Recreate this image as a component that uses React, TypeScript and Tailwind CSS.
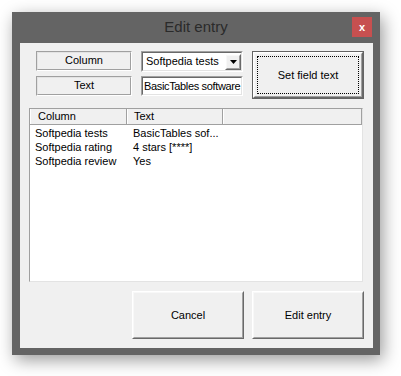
import React from "react";

const font = { fontFamily: '"Liberation Sans", Arial, sans-serif' };

function Raised({ className = "", children }: { className?: string; children?: React.ReactNode }) {
  return (
    <div className={`border border-t-white border-l-white border-b-[#696969] border-r-[#696969] ${className}`}>
      <div className="w-full h-full border border-t-[#f8f8f8] border-l-[#f8f8f8] border-b-[#a0a0a0] border-r-[#a0a0a0] flex items-center justify-center">
        {children}
      </div>
    </div>
  );
}

export default function App() {
  const rows = [
    ["Softpedia tests", "BasicTables sof..."],
    ["Softpedia rating", "4 stars [****]"],
    ["Softpedia review", "Yes"],
  ];
  return (
    <div className="w-[401px] h-[376px] bg-white pt-[12px] pl-[12px] overflow-hidden text-black" style={font}>
      <div className="w-[368px] h-[343px] bg-[#646464] flex flex-col shadow-[3px_5px_16px_rgba(0,0,0,0.4)]">
        <div className="h-[31px] grid grid-cols-[1fr_auto_1fr] items-start">
          <div />
          <div className="text-[15px] text-[#2a2a2a] pt-[6px] leading-[18px]">Edit entry</div>
          <div className="justify-self-end mr-[8px] mt-[5px] w-[20px] h-[20px] bg-[#c75050] flex items-center justify-center text-white text-[11px] font-bold leading-none">
            x
          </div>
        </div>
        <div className="ml-[8px] mr-[7px] mb-[7px] flex-1 bg-[#f0f0f0] flex flex-col text-[11px]">
          <div className="flex mt-[8px]">
            <div className="ml-[16px] w-[96px] flex flex-col gap-[5px]">
              <div className="h-[20px] border border-t-[#a0a0a0] border-l-[#a0a0a0] border-b-white border-r-white flex items-center justify-center">
                <div className="w-full h-full border border-t-[#e3e3e3] border-l-[#e3e3e3] border-b-[#a0a0a0] border-r-[#a0a0a0] flex items-center justify-center pb-[1px]">Column</div>
              </div>
              <div className="h-[20px] border border-t-[#a0a0a0] border-l-[#a0a0a0] border-b-white border-r-white flex items-center justify-center">
                <div className="w-full h-full border border-t-[#e3e3e3] border-l-[#e3e3e3] border-b-[#a0a0a0] border-r-[#a0a0a0] flex items-center justify-center pb-[1px]">Text</div>
              </div>
            </div>
            <div className="ml-[9px] w-[102px] flex flex-col gap-[4px]">
              <div className="h-[21px] bg-white border border-t-[#a0a0a0] border-l-[#a0a0a0] border-b-white border-r-white">
                <div className="w-full h-full border border-t-[#696969] border-l-[#696969] border-b-[#e3e3e3] border-r-[#e3e3e3] flex items-center">
                  <span className="pl-[3px] flex-1 whitespace-nowrap overflow-hidden">Softpedia tests</span>
                  <Raised className="w-[16px] h-[16px] bg-[#f0f0f0]">
                    <svg width="7" height="4" viewBox="0 0 7 4"><path d="M0 0h7L3.5 4z" fill="#000" /></svg>
                  </Raised>
                </div>
              </div>
              <div className="h-[20px] bg-white border border-t-[#a0a0a0] border-l-[#a0a0a0] border-b-white border-r-white">
                <div className="w-full h-full border border-t-[#696969] border-l-[#696969] border-b-[#e3e3e3] border-r-[#e3e3e3] flex items-center overflow-hidden">
                  <span className="pl-[1px] whitespace-nowrap tracking-[-0.35px]">BasicTables software</span>
                </div>
              </div>
            </div>
            <div className="ml-[9px] w-[112px] h-[48px] border border-[#646464]">
              <Raised className="w-full h-full">
                <div className="w-[102px] h-[38px] border border-dotted border-black flex items-center justify-center">
                  Set field text
                </div>
              </Raised>
            </div>
          </div>
          <div className="ml-[9px] mt-[9px] w-[334px] h-[174px] bg-white border border-t-[#a0a0a0] border-l-[#a0a0a0] border-b-[#e3e3e3] border-r-[#e3e3e3] flex flex-col">
            <div className="flex h-[16px] bg-[#f0f0f0] border-b border-[#a0a0a0]">
              <div className="w-[97px] border-r border-[#a0a0a0] pl-[7px] leading-[15px] border-l border-l-white">Column</div>
              <div className="w-[96px] border-r border-[#a0a0a0] pl-[6px] leading-[15px] border-l border-l-white">Text</div>
              <div className="flex-1 border-r border-[#a0a0a0] border-l border-l-white" />
            </div>
            <div className="pt-[1px]">
              {rows.map((r) => (
                <div key={r[0]} className="flex h-[14px] leading-[14px] whitespace-nowrap">
                  <div className="w-[97px] pl-[5px]">{r[0]}</div>
                  <div className="pl-[6px]">{r[1]}</div>
                </div>
              ))}
            </div>
          </div>
          <div className="flex mt-[9px] ml-[112px] gap-[8px]">
            <Raised className="w-[112px] h-[48px]">Cancel</Raised>
            <Raised className="w-[112px] h-[48px]">Edit entry</Raised>
          </div>
        </div>
      </div>
    </div>
  );
}
